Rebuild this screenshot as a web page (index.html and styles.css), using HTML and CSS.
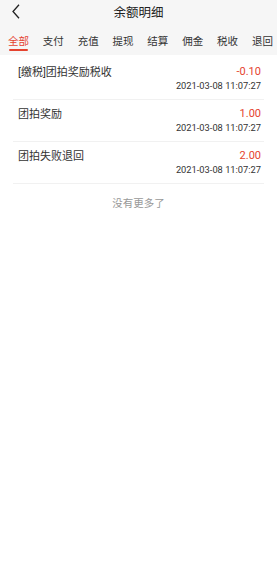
FILE: index.html
```html
<!DOCTYPE html>
<html lang="zh-CN">
<head>
<meta charset="utf-8">
<title>余额明细</title>
<link rel="stylesheet" href="styles.css">
</head>
<body>
<div class="page">
  <header class="header">
    <span class="back">
      <svg width="8" height="15" viewBox="0 0 8 15"><path d="M7 0.8 L1 7.5 L7 14.2" fill="none" stroke="#222" stroke-width="1.3"/></svg>
    </span>
    <h1 class="title">余额明细</h1>
  </header>
  <nav class="tabs">
    <span class="tab active">全部</span>
    <span class="tab">支付</span>
    <span class="tab">充值</span>
    <span class="tab">提现</span>
    <span class="tab">结算</span>
    <span class="tab">佣金</span>
    <span class="tab">税收</span>
    <span class="tab">退回</span>
  </nav>
  <main class="list">
    <div class="row">
      <div class="line"><span class="name">[缴税]团拍奖励税收</span><span class="amount">-0.10</span></div>
      <div class="date">2021-03-08 11:07:27</div>
    </div>
    <div class="row">
      <div class="line"><span class="name">团拍奖励</span><span class="amount">1.00</span></div>
      <div class="date">2021-03-08 11:07:27</div>
    </div>
    <div class="row">
      <div class="line"><span class="name">团拍失败退回</span><span class="amount">2.00</span></div>
      <div class="date">2021-03-08 11:07:27</div>
    </div>
    <p class="nomore">没有更多了</p>
  </main>
</div>
</body>
</html>
```
FILE: styles.css
```css
* { box-sizing: border-box; }
html, body { margin: 0; padding: 0; background: #fff; }
body {
  font-family: Roboto, "Noto Sans CJK SC", sans-serif;
  color: #333;
  width: 277px;
  height: 570px;
  overflow: hidden;
}
.page { background: #fff; min-height: 570px; }
.header {
  height: 26px;
  background: #f6f6f6;
  display: flex;
  align-items: center;
  justify-content: center;
  position: relative;
}
.back {
  position: absolute;
  left: 12px;
  top: 4px;
  display: flex;
}
.title {
  margin: 0;
  font-size: 12.5px;
  font-weight: normal;
  color: #222;
  line-height: 20px;
  margin-top: -1px;
}
.tabs {
  height: 29px;
  background: #f6f6f6;
  display: flex;
  padding-left: 1px;
  overflow: hidden;
}
.tab {
  flex: 0 0 34.86px;
  display: flex;
  justify-content: center;
  align-items: center;
  font-size: 10.5px;
  color: #333;
  position: relative;
  padding-bottom: 1px;
}
.tab.active { color: #e5432f; }
.tab.active::after {
  content: "";
  position: absolute;
  left: 8px;
  right: 8px;
  bottom: 4px;
  height: 2px;
  border-radius: 1px;
  background: #e5432f;
}
.list {
  margin: 0 13px;
  padding-top: 3px;
}
.row {
  padding: 6px 3px 7px 5px;
  border-bottom: 1px solid #f1f1f1;
}
.line {
  display: flex;
  justify-content: space-between;
  align-items: center;
  height: 14px;
}
.name { font-size: 11px; color: #333; }
.amount { font-size: 11px; color: #e5432f; }
.date {
  margin-top: 2px;
  text-align: right;
  font-size: 9.3px;
  line-height: 12px;
  color: #333;
}
.nomore {
  margin: 13px 0 0;
  text-align: center;
  font-size: 10.5px;
  line-height: 14px;
  color: #999;
}
```
